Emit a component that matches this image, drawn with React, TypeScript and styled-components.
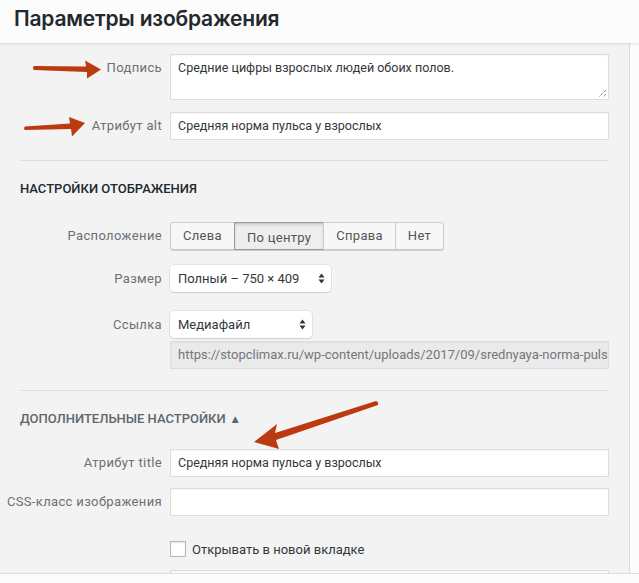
import React from "react";
import styled, { createGlobalStyle } from "styled-components";

const FONT = `Roboto, "Noto Sans", "DejaVu Sans", sans-serif`;
const TITLE_FONT = `Inter, Roboto, sans-serif`;
const ARROW_COLOR = "#bb3a10";

const GlobalStyle = createGlobalStyle`
  html, body {
    margin: 0;
    padding: 0;
    background: #fcfcfc;
  }
  * {
    box-sizing: border-box;
  }
`;

const Page = styled.div`
  position: relative;
  display: flex;
  flex-direction: column;
  width: 639px;
  height: 583px;
  overflow: hidden;
  font-family: ${FONT};
  font-size: 13px;
  color: #32373c;
`;

const Header = styled.header`
  position: relative;
  z-index: 2;
  flex: 0 0 43px;
  padding: 0 14px;
  background: #fcfcfc;
  box-shadow: 0 1px 3px rgba(0, 0, 0, 0.12);
`;

const Title = styled.h1`
  margin: 0;
  font-family: ${TITLE_FONT};
  font-size: 21px;
  font-weight: 600;
  line-height: 38px;
  letter-spacing: -0.2px;
  color: #23282d;
`;

const Body = styled.div`
  display: flex;
  flex: 1;
  min-height: 0;
`;

const Panel = styled.div`
  flex: 0 0 630px;
  padding: 11px 20px 0 0;
  background: #f3f3f3;
  border-right: 1px solid #dddddd;
  overflow: hidden;
`;

const Gutter = styled.div`
  flex: 1;
  background: #fcfcfc;
`;

const Footer = styled.footer`
  flex: 0 0 10px;
  background: #fcfcfc;
  border-top: 1px solid #dddddd;
`;

const Row = styled.div<{ $gap?: number }>`
  display: grid;
  grid-template-columns: 162px 439px;
  column-gap: 8px;
  align-items: start;
  margin-bottom: ${(p) => p.$gap ?? 12}px;
`;

const Label = styled.label`
  text-align: right;
  line-height: 28px;
  letter-spacing: 0.35px;
  color: #6b7075;
  white-space: nowrap;
`;

const Field = styled.div`
  display: flex;
  flex-direction: column;
  gap: 3px;
  align-items: flex-start;
`;

const TextBox = styled.div<{ $readonly?: boolean }>`
  width: 439px;
  height: 28px;
  padding: 0 7px;
  font-size: ${(p) => (p.$readonly ? 13 : 12.5)}px;
  line-height: 26px;
  background: ${(p) => (p.$readonly ? "#eaeaea" : "#ffffff")};
  color: ${(p) => (p.$readonly ? "#72777c" : "#32373c")};
  border: 1px solid #dddddd;
  box-shadow: inset 0 1px 2px rgba(0, 0, 0, 0.04);
  white-space: nowrap;
  overflow: hidden;
`;

const TextArea = styled.div`
  position: relative;
  width: 439px;
  height: 46px;
  padding: 4px 7px;
  font-size: 12.5px;
  line-height: 18px;
  background: #ffffff;
  border: 1px solid #dddddd;
  box-shadow: inset 0 1px 2px rgba(0, 0, 0, 0.04);
`;

const Grip = styled.svg`
  position: absolute;
  right: 1px;
  bottom: 1px;
`;

const Divider = styled.hr`
  margin: 0 0 0 20px;
  border: 0;
  border-top: 1px solid #dddddd;
`;

const SectionTitle = styled.h2<{ $muted?: boolean }>`
  margin: 0;
  padding-left: 20px;
  font-size: 13px;
  font-weight: 500;
  line-height: 18px;
  text-transform: uppercase;
  color: ${(p) => (p.$muted ? "#60666c" : "#23282d")};
`;

const Caret = styled.span`
  margin-left: 6px;
  font-size: 9px;
  vertical-align: 1px;
`;

const ButtonGroup = styled.div`
  display: flex;
  border-radius: 3px;
  box-shadow: 0 1px 0 #cccccc;
`;

const GroupButton = styled.button<{ $active?: boolean }>`
  height: 28px;
  padding: 0 12px;
  margin-left: -1px;
  font-family: ${FONT};
  font-size: 13px;
  letter-spacing: 0.3px;
  color: #555555;
  background: ${(p) => (p.$active ? "#eeeeee" : "#f7f7f7")};
  border: 1px solid ${(p) => (p.$active ? "#999999" : "#cccccc")};
  box-shadow: ${(p) => (p.$active ? "inset 0 2px 5px -3px rgba(0,0,0,0.5)" : "none")};
  line-height: ${(p) => (p.$active ? "29px" : "26px")};
  &:first-child {
    margin-left: 0;
    border-radius: 3px 0 0 3px;
  }
  &:last-child {
    border-radius: 0 3px 3px 0;
  }
`;

const Select = styled.div<{ $width: number }>`
  display: flex;
  align-items: center;
  justify-content: space-between;
  width: ${(p) => p.$width}px;
  height: 27px;
  padding: 0 6px 0 8px;
  background: #ffffff;
  border-radius: 4px;
  box-shadow: 0 0 0 0.5px rgba(0, 0, 0, 0.12), 0 1px 1px rgba(0, 0, 0, 0.1);
  color: #32373c;
`;

const CheckRow = styled.label`
  display: flex;
  align-items: center;
  gap: 6px;
  height: 18px;
`;

const CheckBox = styled.span`
  width: 16px;
  height: 16px;
  background: #ffffff;
  border: 1px solid #b4b9be;
  box-shadow: inset 0 1px 2px rgba(0, 0, 0, 0.1);
`;

const Overlay = styled.svg`
  position: absolute;
  left: 0;
  top: 0;
  pointer-events: none;
  z-index: 3;
`;

const SelectArrows = () => (
  <svg width="7" height="11" viewBox="0 0 7 11">
    <path d="M3.5 0.5 L6.5 4.5 L0.5 4.5 Z M3.5 10.5 L6.5 6.5 L0.5 6.5 Z" fill="#333333" />
  </svg>
);

const Spacer = styled.div<{ $h: number }>`
  height: ${(p) => p.$h}px;
`;

export default function App() {
  return (
    <>
      <GlobalStyle />
      <Page>
        <Header>
          <Title>Параметры изображения</Title>
        </Header>
        <Body>
          <Panel>
            <Row>
              <Label>Подпись</Label>
              <TextArea>
                Средние цифры взрослых людей обоих полов.
                <Grip width="9" height="9" viewBox="0 0 9 9">
                  <path d="M8 1 L1 8 M8 5 L5 8" stroke="#555" strokeWidth="1" strokeDasharray="1 1" />
                </Grip>
              </TextArea>
            </Row>
            <Row $gap={20}>
              <Label>Атрибут alt</Label>
              <TextBox>Средняя норма пульса у взрослых</TextBox>
            </Row>
            <Divider />
            <Spacer $h={19} />
            <SectionTitle>Настройки отображения</SectionTitle>
            <Spacer $h={24} />
            <Row $gap={15}>
              <Label>Расположение</Label>
              <Field>
                <ButtonGroup>
                  <GroupButton>Слева</GroupButton>
                  <GroupButton $active>По центру</GroupButton>
                  <GroupButton>Справа</GroupButton>
                  <GroupButton>Нет</GroupButton>
                </ButtonGroup>
              </Field>
            </Row>
            <Row $gap={18}>
              <Label>Размер</Label>
              <Field>
                <Select $width={161}>
                  Полный – 750 × 409
                  <SelectArrows />
                </Select>
              </Field>
            </Row>
            <Row $gap={21}>
              <Label>Ссылка</Label>
              <Field>
                <Select $width={142}>
                  Медиафайл
                  <SelectArrows />
                </Select>
                <TextBox $readonly>
                  https://stopclimax.ru/wp-content/uploads/2017/09/srednyaya-norma-pulsa-u-vzroslyh.jpg
                </TextBox>
              </Field>
            </Row>
            <Divider />
            <Spacer $h={19} />
            <SectionTitle $muted>
              Дополнительные настройки<Caret>▲</Caret>
            </SectionTitle>
            <Spacer $h={21} />
            <Row $gap={11}>
              <Label>Атрибут title</Label>
              <TextBox>Средняя норма пульса у взрослых</TextBox>
            </Row>
            <Row $gap={24}>
              <Label>CSS-класс изображения</Label>
              <TextBox />
            </Row>
            <Row $gap={12}>
              <span />
              <CheckRow>
                <CheckBox />
                Открывать в новой вкладке
              </CheckRow>
            </Row>
            <Row>
              <span />
              <TextBox />
            </Row>
          </Panel>
          <Gutter />
        </Body>
        <Footer />
        <Overlay width="639" height="583" viewBox="0 0 639 583">
          <path d="M34 66 L86 66.5 L85 60.5 L101 69.5 L87 78.5 L87 72 L34 70 Q32 68 34 66 Z" fill={ARROW_COLOR} />
          <path d="M25 126.5 L70 123.5 L69 117 L85 123 L72 136.5 L71 129 L25 130 Q23 128.5 25 126.5 Z" fill={ARROW_COLOR} />
          <path d="M376 401 L275 433 L277 424 L254 442 L279 449 L276 440 L378 405 Q379 402 376 401 Z" fill={ARROW_COLOR} />
        </Overlay>
      </Page>
    </>
  );
}
